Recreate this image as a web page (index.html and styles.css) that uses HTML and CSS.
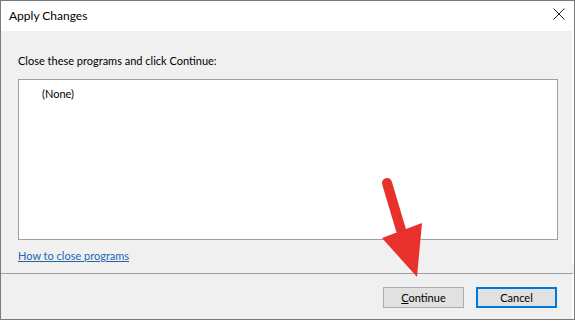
FILE: index.html
```html
<!DOCTYPE html>
<html>
<head>
<meta charset="utf-8">
<link rel="stylesheet" href="styles.css">
</head>
<body>
<div class="window">
  <div class="titlebar">
    <span class="title">Apply Changes</span>
    <svg class="close" width="12" height="12" viewBox="0 0 12 12"><path d="M0.5 0.5 L11.5 11.5 M11.5 0.5 L0.5 11.5" stroke="#222" stroke-width="1" fill="none"/></svg>
  </div>
  <div class="content">
    <div class="label">Close these programs and click Continue:</div>
    <div class="listbox"><div class="item">(None)</div></div>
    <a class="link" href="#">How to close programs</a>
  </div>
  <div class="footer">
    <button class="btn"><u>C</u>ontinue</button>
    <button class="btn btn-default">Cancel</button>
  </div>
</div>
<svg class="arrow" width="575" height="321" viewBox="0 0 575 321">
  <line x1="387" y1="183" x2="401" y2="230" stroke="#e8302c" stroke-width="10" stroke-linecap="round"/>
  <polygon points="382,238 422,223 417,277" fill="#e8302c"/>
</svg>
</body>
</html>
```
FILE: styles.css
```css
html, body {
  margin: 0;
  padding: 0;
  background: #ffffff;
}
body {
  width: 575px;
  height: 321px;
  position: relative;
  overflow: hidden;
  font-family: Lato, "Noto Sans", sans-serif;
  font-size: 11px;
  color: #000;
}
.window {
  box-sizing: border-box;
  width: 575px;
  height: 320px;
  border: 1px solid #7a7a7a;
  background: #f0f0f0;
  display: flex;
  flex-direction: column;
}
.titlebar {
  height: 30px;
  background: #fff;
  display: flex;
  align-items: center;
  justify-content: space-between;
  padding: 0 9px 0 8px;
  flex: none;
}
.title {
  font-size: 12px;
  line-height: 16px;
  margin-top: -1px;
}
.close {
  display: block;
  margin-top: -4px;
}
.content {
  display: flex;
  flex-direction: column;
  align-items: flex-start;
  padding: 22px 15px 0 17px;
  border-right: 2px solid #fff;
}
.label {
  line-height: 16px;
}
.listbox {
  box-sizing: border-box;
  margin-top: 10px;
  width: 540px;
  height: 161px;
  background: #fff;
  border: 1px solid #a0a0a0;
  padding: 6px 0 0 23px;
}
.item {
  line-height: 16px;
}
.link {
  margin-top: 8px;
  line-height: 16px;
  color: #1a66b0;
  text-decoration: underline;
}
.footer {
  margin-top: 9px;
  border-top: 1px solid #a0a0a0;
  flex: 1;
  display: flex;
  justify-content: flex-end;
  align-items: flex-start;
  gap: 12px;
  padding: 13px 15px 0 0;
  border-right: 2px solid #fff;
}
.btn {
  box-sizing: border-box;
  width: 81px;
  height: 21px;
  background: #e1e1e1;
  border: 1px solid #adadad;
  font-family: Lato, "Noto Sans", sans-serif;
  font-size: 11px;
  color: #000;
  padding: 0;
  line-height: 16px;
}
.btn-default {
  border: 2px solid #0078d7;
}
.arrow {
  position: absolute;
  left: 0;
  top: 0;
  pointer-events: none;
}
```
